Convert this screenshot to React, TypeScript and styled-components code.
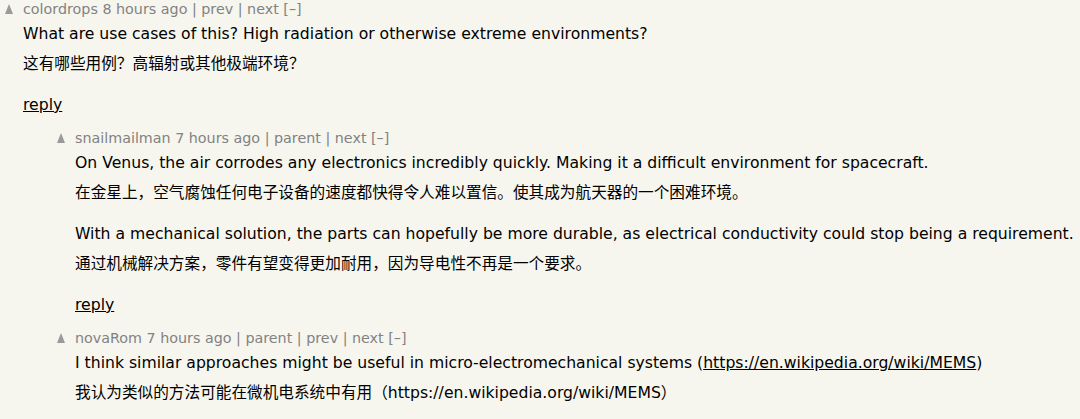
import type { ReactNode } from 'react';
import styled, { createGlobalStyle } from 'styled-components';

const GlobalStyle = createGlobalStyle`
  html, body {
    margin: 0;
    padding: 0;
    background: #f6f6ef;
  }
  body {
    font-family: 'DejaVu Sans', Verdana, 'Noto Sans CJK SC', sans-serif;
    color: #000;
  }
`;

const Thread = styled.div`
  display: flex;
  flex-direction: column;
  gap: 9px;
`;

const Comment = styled.div<{ $depth: number }>`
  display: flex;
  align-items: flex-start;
  padding-left: ${(p) => 5 + p.$depth * 52}px;
`;

const Vote = styled.div`
  width: 0;
  height: 0;
  margin-top: 4px;
  margin-right: 10px;
  border-left: 4.5px solid transparent;
  border-right: 4.5px solid transparent;
  border-bottom: 10px solid #9a9a9a;
  flex-shrink: 0;
`;

const Content = styled.div`
  display: flex;
  flex-direction: column;
`;

const Meta = styled.div`
  font-size: 14.3px;
  line-height: 18px;
  color: #828282;
  white-space: nowrap;
`;

const Body = styled.div`
  margin-top: 1px;
  font-size: 15.65px;
`;

const Para = styled.div`
  margin-bottom: 11px;
`;

const Line = styled.div`
  line-height: 30px;
  white-space: nowrap;
`;

const Reply = styled.div`
  line-height: 30px;
`;

const Link = styled.a`
  color: #000;
  text-decoration: underline;
`;

interface Paragraph {
  en: ReactNode;
  zh: ReactNode;
}

interface CommentData {
  user: string;
  age: string;
  nav: string[];
  depth: number;
  paragraphs: Paragraph[];
  reply?: boolean;
}

const MEMS = 'https://en.wikipedia.org/wiki/MEMS';

const comments: CommentData[] = [
  {
    user: 'colordrops',
    age: '8 hours ago',
    nav: ['prev', 'next'],
    depth: 0,
    reply: true,
    paragraphs: [
      {
        en: 'What are use cases of this? High radiation or otherwise extreme environments?',
        zh: '这有哪些用例？高辐射或其他极端环境？',
      },
    ],
  },
  {
    user: 'snailmailman',
    age: '7 hours ago',
    nav: ['parent', 'next'],
    depth: 1,
    reply: true,
    paragraphs: [
      {
        en: 'On Venus, the air corrodes any electronics incredibly quickly. Making it a difficult environment for spacecraft.',
        zh: '在金星上，空气腐蚀任何电子设备的速度都快得令人难以置信。使其成为航天器的一个困难环境。',
      },
      {
        en: 'With a mechanical solution, the parts can hopefully be more durable, as electrical conductivity could stop being a requirement.',
        zh: '通过机械解决方案，零件有望变得更加耐用，因为导电性不再是一个要求。',
      },
    ],
  },
  {
    user: 'novaRom',
    age: '7 hours ago',
    nav: ['parent', 'prev', 'next'],
    depth: 1,
    paragraphs: [
      {
        en: (
          <>
            I think similar approaches might be useful in micro-electromechanical systems (
            <Link href={MEMS}>{MEMS}</Link>)
          </>
        ),
        zh: `我认为类似的方法可能在微机电系统中有用（${MEMS}）`,
      },
    ],
  },
];

export default function App() {
  return (
    <>
      <GlobalStyle />
      <Thread>
        {comments.map((c) => (
          <Comment key={c.user} $depth={c.depth}>
            <Vote aria-label="upvote" />
            <Content>
              <Meta>
                {c.user} {c.age}
                {c.nav.map((n) => (
                  <span key={n}> | {n}</span>
                ))}{' '}
                [–]
              </Meta>
              <Body>
                {c.paragraphs.map((p, i) => (
                  <Para key={i}>
                    <Line>{p.en}</Line>
                    <Line>{p.zh}</Line>
                  </Para>
                ))}
                {c.reply && (
                  <Reply>
                    <Link href="#">reply</Link>
                  </Reply>
                )}
              </Body>
            </Content>
          </Comment>
        ))}
      </Thread>
    </>
  );
}
